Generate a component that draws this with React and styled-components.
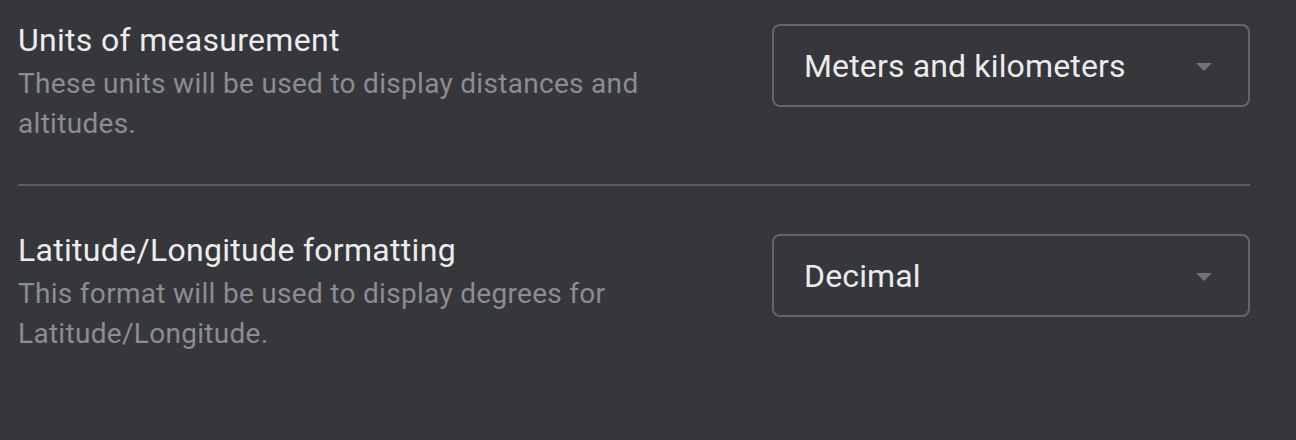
import React from 'react'
import styled, { createGlobalStyle } from 'styled-components'

const GlobalStyle = createGlobalStyle`
    html, body {
        margin: 0;
        padding: 0;
        background-color: #36373b;
    }
    body {
        font-family: Roboto, 'Liberation Sans', sans-serif;
        -webkit-font-smoothing: antialiased;
    }
`

const Page = styled.div`
    width: 1250px;
    padding-left: 18px;
    min-height: 440px;
    box-sizing: border-box;
`

const SettingRow = styled.div`
    display: flex;
    align-items: flex-start;
    justify-content: space-between;
    padding-top: ${props => props.first ? '20px' : '44px'};
    padding-bottom: 40px;
`

const TextColumn = styled.div`
    display: flex;
    flex-direction: column;
    width: 680px;
`

const Title = styled.div`
    font-size: 32px;
    line-height: 40px;
    letter-spacing: 0.3px;
    color: #ececee;
    font-weight: 400;
`

const Description = styled.div`
    margin-top: 4px;
    font-size: 28px;
    line-height: 40px;
    letter-spacing: 0.3px;
    color: #8b8d92;
    font-weight: 400;
`

const Divider = styled.hr`
    margin: 0;
    border: none;
    height: 2px;
    background-color: #5e5f63;
`

const SelectBox = styled.div`
    margin-top: 4px;
    width: 478px;
    height: 83px;
    box-sizing: border-box;
    border: 2px solid #656669;
    border-radius: 8px;
    display: flex;
    align-items: center;
    justify-content: space-between;
    padding: 0 36px 0 30px;
    cursor: pointer;
`

const SelectValue = styled.span`
    font-size: 32px;
    letter-spacing: 0.15px;
    color: #ebebed;
`

const Arrow = styled.span`
    width: 0;
    height: 0;
    border-left: 8px solid transparent;
    border-right: 8px solid transparent;
    border-top: 8px solid #717276;
    margin-top: 2px;
`

function Setting({ first, title, description, value }) {
    return (
        <SettingRow first={first}>
            <TextColumn>
                <Title>{title}</Title>
                <Description>{description}</Description>
            </TextColumn>
            <SelectBox>
                <SelectValue>{value}</SelectValue>
                <Arrow />
            </SelectBox>
        </SettingRow>
    )
}

export default function App() {
    return (
        <>
            <GlobalStyle />
            <Page>
                <Setting
                    first
                    title="Units of measurement"
                    description="These units will be used to display distances and altitudes."
                    value="Meters and kilometers"
                />
                <Divider />
                <Setting
                    title="Latitude/Longitude formatting"
                    description="This format will be used to display degrees for Latitude/Longitude."
                    value="Decimal"
                />
            </Page>
        </>
    )
}
